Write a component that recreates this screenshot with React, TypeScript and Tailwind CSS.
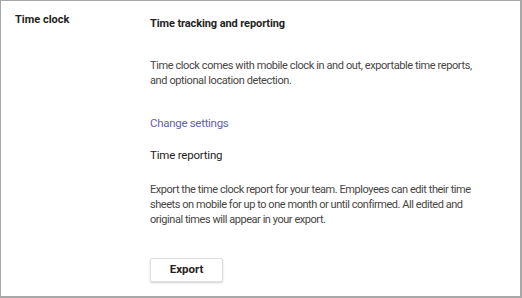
import React from 'react';

function App() {
  return (
    <div
      className="h-[298px] w-[522px] overflow-hidden border-t border-l border-r-2 border-b-2 border-[#a8a8a8] bg-white text-[#252423]"
      style={{ fontFamily: 'Roboto, "Noto Sans", sans-serif' }}
    >
      <div className="flex">
        <div className="w-[149px] shrink-0 pl-[14px] pt-[11px]">
          <h2 className="text-[11px] font-bold leading-[16px]">Time clock</h2>
        </div>
        <div className="pt-[15px] whitespace-nowrap">
          <h3 className="text-[11px] font-bold leading-[16px] tracking-[-0.1px]">Time tracking and reporting</h3>
          <p className="mt-[26px] text-[11px] leading-[15px] tracking-[-0.4px] text-[#484644]">
            Time clock comes with mobile clock in and out, exportable time reports,
            <br />
            and optional location detection.
          </p>
          <a href="#" className="mt-[27px] block text-[11.5px] leading-[16px] tracking-[-0.3px] text-[#6264a7]">
            Change settings
          </a>
          <h3 className="mt-[16px] text-[11.5px] leading-[16px] tracking-[-0.2px]">Time reporting</h3>
          <p className="mt-[19px] text-[11px] leading-[15px] tracking-[-0.45px] text-[#484644]">
            Export the time clock report for your team. Employees can edit their time
            <br />
            sheets on mobile for up to one month or until confirmed. All edited and
            <br />
            original times will appear in your export.
          </p>
          <button className="mt-[31px] h-[24px] w-[73px] rounded-[2px] border border-[#e1dfdd] bg-white text-[11.5px] font-bold text-[#252423] shadow-[0_1px_2px_rgba(0,0,0,0.18)]">
            Export
          </button>
        </div>
      </div>
    </div>
  );
}

export default App;
